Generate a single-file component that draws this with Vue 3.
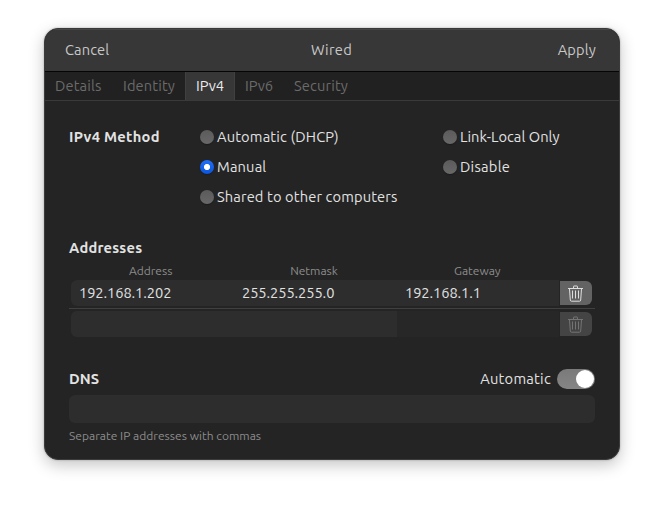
<script setup>
import { ref } from 'vue'

const tabs = [
  { name: 'Details', cls: 'details' },
  { name: 'Identity', cls: 'identity' },
  { name: 'IPv4', cls: 'ipv4' },
  { name: 'IPv6', cls: 'ipv6' },
  { name: 'Security', cls: 'security' },
]
const activeTab = ref('IPv4')

const methods = [
  { name: 'Automatic (DHCP)', cls: 'dhcp' },
  { name: 'Link-Local Only', cls: 'link' },
  { name: 'Manual', cls: 'manual' },
  { name: 'Disable', cls: 'disable' },
  { name: 'Shared to other computers', cls: 'shared' },
]
const method = ref('Manual')

const rows = [
  ['192.168.1.202', '255.255.255.0', '192.168.1.1'],
  ['', '', ''],
]
</script>

<template>
  <main class="stage">
    <section class="window">
      <header class="titlebar">
        <span class="cancel">Cancel</span>
        <span class="title">Wired</span>
        <span class="apply">Apply</span>
      </header>

      <nav class="tabs">
        <div
          v-for="t in tabs"
          :key="t.name"
          class="tab"
          :class="[t.cls, { active: t.name === activeTab }]"
          @click="activeTab = t.name"
        >
          <span>{{ t.name }}</span>
        </div>
      </nav>

      <div class="content">
        <div class="method">
          <h2 class="heading method-heading">IPv4 Method</h2>
          <div class="options">
            <div v-for="m in methods" :key="m.name" class="option" :class="m.cls" @click="method = m.name">
              <i class="radio" :class="{ on: m.name === method }"></i>
              <span>{{ m.name }}</span>
            </div>
          </div>
        </div>

        <h2 class="heading addresses-heading">Addresses</h2>
        <div class="columns">
          <span>Address</span><span>Netmask</span><span>Gateway</span>
        </div>
        <div v-for="(row, i) in rows" :key="i" class="row" :class="{ empty: !row[0] }">
          <div class="cells">
            <span v-for="(c, j) in row" :key="j" class="cell">{{ c }}</span>
          </div>
          <div class="trash">
            <svg width="15" height="17" viewBox="0 0 15 17" fill="none" stroke="currentColor">
              <path d="M0 3.5H15M5.5 3V1.5Q5.5 1 6 1H9Q9.5 1 9.5 1.5V3M1.5 4L2.3 15Q2.4 16.2 3.4 16.2H11.6Q12.6 16.2 12.7 15L13.5 4" />
              <path d="M4.5 5.5V13.5M7.5 5.5V13.5M10.5 5.5V13.5" />
            </svg>
          </div>
        </div>

        <div class="dns">
          <h2 class="heading dns-heading">DNS</h2>
          <span class="auto">Automatic</span>
          <div class="switch"><i></i></div>
        </div>
        <div class="entry"></div>
        <p class="hint">Separate IP addresses with commas</p>
      </div>
    </section>
  </main>
</template>

<style>
body {
  background: #fff;
}
</style>

<style scoped>
.stage {
  box-sizing: border-box;
  width: 664px;
  height: 520px;
  padding: 28px 44px 60px;
  background: #fff;
  font-family: Ubuntu, "Noto Sans", "Open Sans", sans-serif;
  font-size: 14.667px;
  line-height: 20px;
  color: #e2e2e2;
  white-space: nowrap;
}
.window {
  box-sizing: border-box;
  width: 576px;
  height: 432px;
  border: 1px solid #3b3b3b;
  border-radius: 14px;
  background: #242424;
  overflow: hidden;
  box-shadow: 0 5px 16px rgba(0, 0, 0, 0.23), 0 0 2px rgba(0, 0, 0, 0.3);
}
.titlebar {
  box-sizing: border-box;
  height: 43px;
  padding: 0 23px 1px 20px;
  display: grid;
  grid-template-columns: 1fr auto 1fr;
  align-items: center;
  background: #373737;
  border-bottom: 1px solid #050505;
  box-shadow: inset 0 1px #484848;
  color: #c8c8c8;
}
.cancel {
  letter-spacing: 0.08px;
}
.title {
  padding-left: 2px;
  letter-spacing: 0.3px;
}
.apply {
  text-align: right;
  letter-spacing: 0.15px;
}
.tabs {
  box-sizing: border-box;
  height: 29px;
  display: flex;
  background: #212121;
  border-bottom: 1px solid #3a3a3a;
  color: #6b6b6b;
  letter-spacing: 0.14px;
}
.tab {
  box-sizing: border-box;
  height: 28px;
  padding-left: 10px;
  line-height: 28px;
}
.details { width: 68px; }
.identity { width: 72px; }
.ipv4 { width: 50px; letter-spacing: 0; }
.ipv6 { width: 49px; letter-spacing: 0; }
.security { width: 76px; }
.tab.active {
  background: #373737;
  border-left: 1px solid #404040;
  border-right: 1px solid #404040;
  color: #ececec;
}
.content {
  padding: 26px 24px 0;
}
.heading {
  margin: 0;
  font-size: 14.667px;
  line-height: 20px;
  font-weight: 700;
  letter-spacing: 0.22px;
}
.method {
  height: 90px;
  display: flex;
}
.method-heading {
  width: 131px;
  letter-spacing: 0.3px;
}
.options {
  margin-top: -5px;
  display: grid;
  grid-template-columns: 243px 152px;
  grid-auto-rows: 30px;
}
.option {
  height: 30px;
  display: flex;
  align-items: center;
  gap: 3px;
  letter-spacing: 0.16px;
}
.option.link { letter-spacing: 0.04px; }
.option.shared { letter-spacing: 0.13px; }
.option.disable { letter-spacing: 0.26px; }
.radio {
  flex: none;
  width: 14px;
  height: 14px;
  border-radius: 50%;
  background: linear-gradient(#5b5b5b, #686868);
  box-shadow: 0 1px 1px rgba(0, 0, 0, 0.25);
}
.radio.on {
  background: radial-gradient(circle, #fff 2.7px, transparent 3.4px), linear-gradient(#2070f5, #0c55dc);
}
.addresses-heading {
  margin-top: 21px;
}
.columns {
  width: 490px;
  height: 16px;
  margin-top: 5px;
  display: grid;
  grid-template-columns: repeat(3, 1fr);
  text-align: center;
  font-size: 12px;
  line-height: 16px;
  color: #8c8c8c;
}
.row {
  box-sizing: border-box;
  height: 30px;
  padding: 1px 2px 0;
  display: flex;
  border-bottom: 1px solid #404040;
}
.row.empty {
  border-bottom: 0;
  padding-top: 2px;
}
.cells {
  width: 488px;
  height: 26px;
  display: grid;
  grid-template-columns: 163px 163px 162px;
  border-radius: 6px 0 0 6px;
  background: #2d2d2d;
}
.empty .cells {
  background: linear-gradient(90deg, #2d2d2d 326px, #272727 326px);
}
.cell {
  padding-left: 8px;
  line-height: 26px;
  letter-spacing: -0.09px;
}
.trash {
  box-sizing: border-box;
  width: 32px;
  height: 24px;
  margin: 1px 0 0 1px;
  padding-left: 8px;
  display: flex;
  align-items: center;
  border-radius: 0 6px 6px 0;
  background: #636363;
  color: #dedede;
}
.empty .trash {
  background: #444;
  color: #747474;
}
.dns {
  height: 20px;
  margin-top: 30px;
  display: flex;
  align-items: center;
}
.dns-heading {
  letter-spacing: 0.1px;
}
.auto {
  margin-left: auto;
  letter-spacing: 0.26px;
}
.switch {
  box-sizing: border-box;
  width: 38px;
  height: 20px;
  margin-left: 6px;
  padding: 1px;
  display: flex;
  justify-content: flex-end;
  border-radius: 10px;
  background: linear-gradient(#7a7a7a, #858585);
}
.switch i {
  width: 18px;
  height: 18px;
  border-radius: 50%;
  background: #fff;
}
.entry {
  height: 28px;
  margin-top: 6px;
  border-radius: 6px;
  background: #2d2d2d;
}
.hint {
  margin: 5px 0 0;
  font-size: 12px;
  line-height: 16px;
  letter-spacing: 0.02px;
  color: #8c8c8c;
}
</style>
